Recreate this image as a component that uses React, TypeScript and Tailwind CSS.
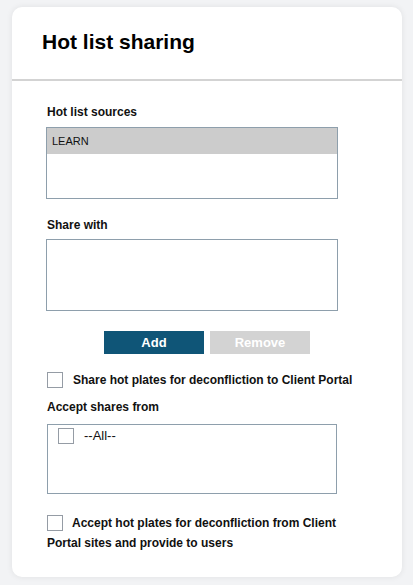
import { useState } from 'react';

function Checkbox({ checked, onChange, className = '' }: { checked: boolean; onChange: () => void; className?: string }) {
  return (
    <button
      type="button"
      onClick={onChange}
      className={`w-4 h-4 shrink-0 border border-[#959ca5] bg-white ${className}`}
    >
      {checked && (
        <svg viewBox="0 0 16 16" className="w-full h-full">
          <path d="M3 8l3 3 7-7" fill="none" stroke="#0f5577" strokeWidth="2" />
        </svg>
      )}
    </button>
  );
}

export default function App() {
  const [shareToPortal, setShareToPortal] = useState(false);
  const [acceptAll, setAcceptAll] = useState(false);
  const [acceptFromPortal, setAcceptFromPortal] = useState(false);

  return (
    <div className="min-h-[585px] bg-[#f2f3f5] pt-[7px] pl-[12px] pr-[11px] font-['Liberation_Sans',Arial,sans-serif] text-[#111]">
      <div className="w-[390px] h-[570px] bg-white rounded-[10px] shadow-[0_0_6px_rgba(0,0,0,0.08)]">
        <div className="h-[74px] border-b-2 border-[#d3d3d3] pt-[23px] pl-[30px]">
          <h2 className="text-[21px] leading-[24px] font-bold text-black">Hot list sharing</h2>
        </div>

        <div className="pt-[24px] pl-[34px]">
          <div className="pl-[1px] text-[12px] leading-[14px] font-bold">Hot list sources</div>
          <div className="mt-[8px] w-[292px] h-[72px] border border-[#8e9fac]">
            <div className="h-[26px] bg-[#cccccc] pl-[5px] text-[11px] leading-[26px]">LEARN</div>
          </div>

          <div className="mt-[19px] pl-[1px] text-[12px] leading-[14px] font-bold">Share with</div>
          <div className="mt-[7px] w-[292px] h-[72px] border border-[#8e9fac]"></div>

          <div className="mt-[20px] ml-[58px] flex gap-[6px]">
            <button className="w-[100px] h-[23px] bg-[#0f5577] text-white text-[13px] font-bold">Add</button>
            <button className="w-[100px] h-[23px] bg-[#d3d3d3] text-white text-[13px] font-bold" disabled>
              Remove
            </button>
          </div>

          <div className="mt-[18px] ml-[1px] flex items-center gap-[10px]">
            <Checkbox checked={shareToPortal} onChange={() => setShareToPortal(!shareToPortal)} />
            <span className="text-[12px] leading-[16px] font-bold">Share hot plates for deconfliction to Client Portal</span>
          </div>

          <div className="mt-[12px] pl-[1px] text-[12px] leading-[14px] font-bold">Accept shares from</div>
          <div className="mt-[10px] ml-[1px] w-[290px] h-[70px] border border-[#8e9fac] pt-[3px] pl-[10px]">
            <div className="flex items-center gap-[10px]">
              <Checkbox checked={acceptAll} onChange={() => setAcceptAll(!acceptAll)} />
              <span className="text-[13px] leading-[16px]">--All--</span>
            </div>
          </div>

          <p className="mt-[19px] pl-[1px] w-[300px] text-[12px] leading-[20px] font-bold">
            <Checkbox
              checked={acceptFromPortal}
              onChange={() => setAcceptFromPortal(!acceptFromPortal)}
              className="inline-block align-[-3px] mr-[9px]"
            />
            Accept hot plates for deconfliction from Client Portal sites and provide to users
          </p>
        </div>
      </div>
    </div>
  );
}
